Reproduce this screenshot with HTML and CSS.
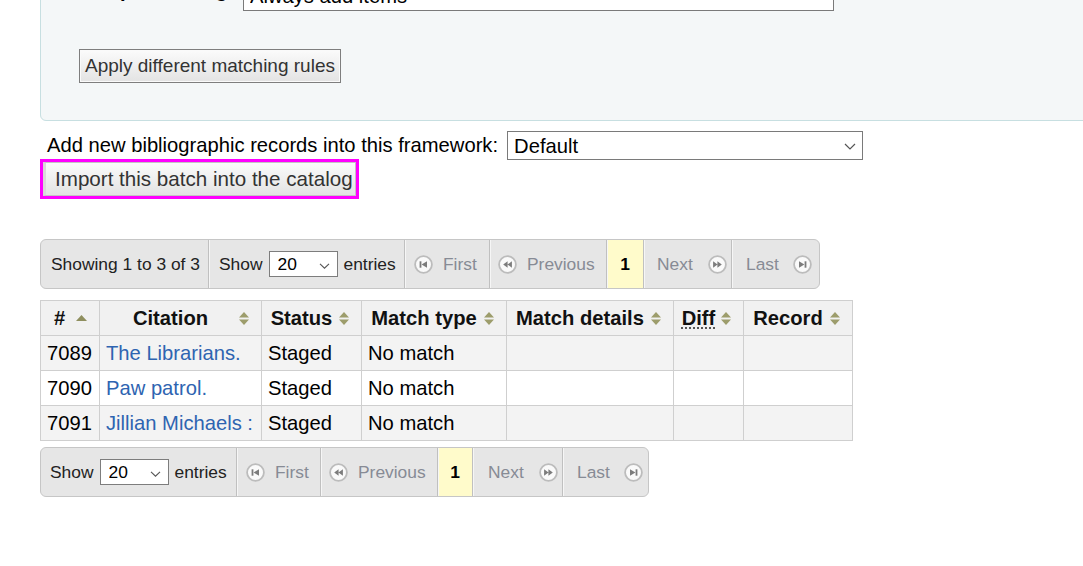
FILE: index.html
```html
<!DOCTYPE html>
<html>
<head>
<meta charset="utf-8">
<title>Manage staged records</title>
<link rel="stylesheet" href="styles.css">
</head>
<body>
<div class="page">
  <fieldset class="rows">
    <div class="field-row">
      <label class="lbl">Item processing:</label>
      <span class="sel sel-wide">
        <select><option>Always add items</option></select>
        <svg class="chev" width="12" height="7" viewBox="0 0 12 7"><path d="M1 1l5 5 5-5" fill="none" stroke="#555" stroke-width="1.2"/></svg>
      </span>
    </div>
    <button class="btn btn-apply">Apply different matching rules</button>
  </fieldset>

  <div class="fw-row">
    <span class="fw-label">Add new bibliographic records into this framework:</span>
    <span class="sel sel-fw">
      <select><option>Default</option></select>
      <svg class="chev" width="12" height="7" viewBox="0 0 12 7"><path d="M1 1l5 5 5-5" fill="none" stroke="#555" stroke-width="1.2"/></svg>
    </span>
  </div>
  <button class="btn btn-import">Import this batch into the catalog</button>

  <div class="pager pager-top">
    <div class="pg-seg pg-info">Showing 1 to 3 of 3</div>
    <div class="pg-seg pg-len">Show
      <span class="sel sel-sm">
        <select><option>20</option></select>
        <svg class="chev" width="11" height="6" viewBox="0 0 11 6"><path d="M1 .8l4.5 4.4 4.5-4.4" fill="none" stroke="#555" stroke-width="1.1"/></svg>
      </span>
      entries</div>
    <div class="pg-seg pg-btn pg-first">
      <svg class="pg-ico" width="19" height="19" viewBox="0 0 19 19"><circle cx="9.5" cy="9.5" r="8.4" fill="#fafafa" stroke="#bcbcbc" stroke-width="1.8"/><rect x="5.6" y="6.3" width="1.8" height="6.4" fill="#7c7c7c"/><path d="M13 6.3v6.4L7.6 9.5z" fill="#7c7c7c"/></svg>
      <span>First</span></div>
    <div class="pg-seg pg-btn pg-prev">
      <svg class="pg-ico" width="19" height="19" viewBox="0 0 19 19"><circle cx="9.5" cy="9.5" r="8.4" fill="#fafafa" stroke="#bcbcbc" stroke-width="1.8"/><path d="M9.6 6.3v6.4L5.2 9.5zM13.9 6.3v6.4L9.5 9.5z" fill="#7c7c7c"/></svg>
      <span>Previous</span></div>
    <div class="pg-seg pg-cur">1</div>
    <div class="pg-seg pg-btn pg-next">
      <span>Next</span>
      <svg class="pg-ico" width="19" height="19" viewBox="0 0 19 19"><circle cx="9.5" cy="9.5" r="8.4" fill="#fafafa" stroke="#bcbcbc" stroke-width="1.8"/><path d="M5.1 6.3v6.4l4.4-3.2zM9.4 6.3v6.4l4.4-3.2z" fill="#7c7c7c"/></svg></div>
    <div class="pg-seg pg-btn pg-last">
      <span>Last</span>
      <svg class="pg-ico" width="19" height="19" viewBox="0 0 19 19"><circle cx="9.5" cy="9.5" r="8.4" fill="#fafafa" stroke="#bcbcbc" stroke-width="1.8"/><path d="M6 6.3v6.4l5.4-3.2z" fill="#7c7c7c"/><rect x="11.6" y="6.3" width="1.8" height="6.4" fill="#7c7c7c"/></svg></div>
  </div>

  <table class="records">
    <colgroup>
      <col class="c1"><col class="c2"><col class="c3"><col class="c4"><col class="c5"><col class="c6"><col class="c7">
    </colgroup>
    <thead>
      <tr>
        <th><div class="th-in"><span>#</span><svg width="11" height="6" viewBox="0 0 11 6"><path d="M5.5 0L11 6H0z" fill="#8f8f5f"/></svg></div></th>
        <th><div class="th-in"><span>Citation</span><svg width="10" height="13" viewBox="0 0 10 13"><path d="M5 0l5 5.5H0zM5 13L0 7.5h10z" fill="#9d9d6c"/></svg></div></th>
        <th><div class="th-in"><span>Status</span><svg width="10" height="13" viewBox="0 0 10 13"><path d="M5 0l5 5.5H0zM5 13L0 7.5h10z" fill="#9d9d6c"/></svg></div></th>
        <th><div class="th-in"><span>Match type</span><svg width="10" height="13" viewBox="0 0 10 13"><path d="M5 0l5 5.5H0zM5 13L0 7.5h10z" fill="#9d9d6c"/></svg></div></th>
        <th><div class="th-in"><span>Match details</span><svg width="10" height="13" viewBox="0 0 10 13"><path d="M5 0l5 5.5H0zM5 13L0 7.5h10z" fill="#9d9d6c"/></svg></div></th>
        <th><div class="th-in"><span><abbr title="Differences between the original bibliographic record and the imported">Diff</abbr></span><svg width="10" height="13" viewBox="0 0 10 13"><path d="M5 0l5 5.5H0zM5 13L0 7.5h10z" fill="#9d9d6c"/></svg></div></th>
        <th><div class="th-in"><span>Record</span><svg width="10" height="13" viewBox="0 0 10 13"><path d="M5 0l5 5.5H0zM5 13L0 7.5h10z" fill="#9d9d6c"/></svg></div></th>
      </tr>
    </thead>
    <tbody>
      <tr class="odd"><td>7089</td><td><a href="#">The Librarians.</a></td><td>Staged</td><td>No match</td><td></td><td></td><td></td></tr>
      <tr class="even"><td>7090</td><td><a href="#">Paw patrol.</a></td><td>Staged</td><td>No match</td><td></td><td></td><td></td></tr>
      <tr class="odd"><td>7091</td><td><a href="#">Jillian Michaels :</a></td><td>Staged</td><td>No match</td><td></td><td></td><td></td></tr>
    </tbody>
  </table>

  <div class="pager pager-bottom">
    <div class="pg-seg pg-len pg-len-b">Show
      <span class="sel sel-sm">
        <select><option>20</option></select>
        <svg class="chev" width="11" height="6" viewBox="0 0 11 6"><path d="M1 .8l4.5 4.4 4.5-4.4" fill="none" stroke="#555" stroke-width="1.1"/></svg>
      </span>
      entries</div>
    <div class="pg-seg pg-btn pg-first pg-first-b">
      <svg class="pg-ico" width="19" height="19" viewBox="0 0 19 19"><circle cx="9.5" cy="9.5" r="8.4" fill="#fafafa" stroke="#bcbcbc" stroke-width="1.8"/><rect x="5.6" y="6.3" width="1.8" height="6.4" fill="#7c7c7c"/><path d="M13 6.3v6.4L7.6 9.5z" fill="#7c7c7c"/></svg>
      <span>First</span></div>
    <div class="pg-seg pg-btn pg-prev">
      <svg class="pg-ico" width="19" height="19" viewBox="0 0 19 19"><circle cx="9.5" cy="9.5" r="8.4" fill="#fafafa" stroke="#bcbcbc" stroke-width="1.8"/><path d="M9.6 6.3v6.4L5.2 9.5zM13.9 6.3v6.4L9.5 9.5z" fill="#7c7c7c"/></svg>
      <span>Previous</span></div>
    <div class="pg-seg pg-cur pg-cur-b">1</div>
    <div class="pg-seg pg-btn pg-next pg-next-b">
      <span>Next</span>
      <svg class="pg-ico" width="19" height="19" viewBox="0 0 19 19"><circle cx="9.5" cy="9.5" r="8.4" fill="#fafafa" stroke="#bcbcbc" stroke-width="1.8"/><path d="M5.1 6.3v6.4l4.4-3.2zM9.4 6.3v6.4l4.4-3.2z" fill="#7c7c7c"/></svg></div>
    <div class="pg-seg pg-btn pg-last pg-last-b">
      <span>Last</span>
      <svg class="pg-ico" width="19" height="19" viewBox="0 0 19 19"><circle cx="9.5" cy="9.5" r="8.4" fill="#fafafa" stroke="#bcbcbc" stroke-width="1.8"/><path d="M6 6.3v6.4l5.4-3.2z" fill="#7c7c7c"/><rect x="11.6" y="6.3" width="1.8" height="6.4" fill="#7c7c7c"/></svg></div>
  </div>
</div>
</body>
</html>
```

FILE: styles.css
```css
* { box-sizing: border-box; }

html, body {
  margin: 0;
  padding: 0;
  background: #fff;
  overflow: hidden;
}

body {
  font-family: "Liberation Sans", Arial, sans-serif;
  font-size: 20.2px;
  color: #000;
}

.page {
  padding-left: 40px;
  margin-top: -30px;
}

/* ---------- top fieldset ---------- */
.rows {
  margin: 0 -30px 0 0;
  min-width: 0;
  padding: 10px 0 37px 32px;
  background: #f4f7f8;
  border: 1px solid #c7dfe1;
  border-radius: 6px;
}

.field-row {
  display: flex;
  align-items: flex-start;
  height: 30px;
}

.lbl {
  width: 160px;
  margin: -2px 10px 0 0;
  line-height: 23px;
  font-weight: bold;
  text-align: right;
  white-space: nowrap;
}

.sel {
  position: relative;
  display: inline-block;
}

.sel select {
  appearance: none;
  -webkit-appearance: none;
  display: block;
  margin: 0;
  border: 1px solid #7a7a7a;
  background: #fff;
  color: #000;
  font-family: "Liberation Sans", Arial, sans-serif;
  border-radius: 0;
}

.sel .chev {
  position: absolute;
  top: 50%;
  pointer-events: none;
}

.sel-wide select {
  width: 591px;
  height: 30px;
  font-size: 20.2px;
  padding: 0 6px;
}
.sel-wide .chev { right: 10px; margin-top: -3px; }

.btn {
  display: block;
  font-family: "Liberation Sans", Arial, sans-serif;
  color: #333;
  cursor: pointer;
  border-radius: 0;
  background: linear-gradient(#fbfbfb, #e3e3e3);
}

.btn-apply {
  margin: 38px 0 0 6px;
  height: 34px;
  padding: 0 5px;
  font-size: 19px;
  border: 1px solid #7e7e7e;
  box-shadow: inset 0 0 0 1px #fafafa;
}

/* ---------- framework row ---------- */
.fw-row {
  display: flex;
  align-items: center;
  height: 29px;
  margin-top: 10px;
  padding-left: 7px;
}

.fw-label { margin-right: 9px; }

.sel-fw select {
  width: 356px;
  height: 29px;
  font-size: 20.2px;
  padding: 0 6px;
}
.sel-fw .chev { right: 7px; margin-top: -3px; }

.btn-import {
  margin: 2px 0 0 3px;
  width: 313px;
  height: 34px;
  padding: 0 0 0 9px;
  text-align: left;
  font-size: 20.6px;
  border: 1px solid #c4c4c4;
  border-left: 3px solid #d9d9d9;
  outline: 3px solid #ff00ff;
}

/* ---------- pager ---------- */
.pager {
  display: flex;
  width: fit-content;
  height: 50px;
  background: #e6e6e6;
  border: 1px solid #c6c6c6;
  border-radius: 6px;
  overflow: hidden;
  font-size: 17.4px;
  color: #222;
}

.pager-top { margin-top: 43px; }
.pager-bottom { margin-top: 6px; }

.pg-seg {
  display: flex;
  align-items: center;
  flex: none;
  border-left: 1px solid #c0c0c0;
  box-shadow: inset 1px 0 0 #f6f6f6;
  white-space: nowrap;
}
.pg-seg:first-child { border-left: 0; box-shadow: none; }

.pg-info { width: 167px; padding-left: 10px; }

.pg-len { width: 196px; padding-left: 10px; }
.pg-len-b { width: 195px; padding-left: 9px; }

.sel-sm { margin: 0 6px; }
.sel-sm select {
  width: 69px;
  height: 26px;
  font-size: 17.4px;
  padding: 0 8px;
  border-color: #7d7d7d;
}
.sel-sm .chev { right: 8px; margin-top: -1px; }

.pg-btn { color: #878b95; }
.pg-first { width: 85px; gap: 10px; padding-left: 9px; }
.pg-first-b { width: 84px; }
.pg-prev { width: 117px; gap: 10px; padding-left: 8px; }
.pg-next { width: 88px; gap: 15px; padding-left: 13px; }
.pg-next-b { width: 90px; padding-left: 15px; }
.pg-last { width: 88px; gap: 14px; padding-left: 14px; }
.pg-last-b { width: 86px; }

.pg-ico { flex: none; }

.pg-cur {
  width: 37px;
  justify-content: center;
  background: #fffbcb;
  font-weight: bold;
  color: #000;
}
.pg-cur-b { width: 35px; }

/* ---------- table ---------- */
.records {
  margin-top: 11px;
  border-collapse: collapse;
  table-layout: fixed;
  width: 812px;
  border: 1px solid #cbcbcb;
}

.c1 { width: 59px; }
.c2 { width: 162px; }
.c3 { width: 100px; }
.c4 { width: 145px; }
.c5 { width: 167px; }
.c6 { width: 70px; }
.c7 { width: 109px; }

.records th,
.records td {
  border: 1px solid #cfcfcf;
  height: 35px;
  line-height: 23px;
  padding: 0 6px;
  white-space: nowrap;
  overflow: hidden;
}

.records th {
  background: #f1f1f1;
  font-weight: bold;
  padding: 0 12px 0 6px;
  color: #111;
}

.th-in {
  display: flex;
  align-items: center;
}
.th-in span {
  flex: 1;
  text-align: center;
}
.th-in svg { margin-left: 4px; flex: none; }

abbr {
  text-decoration: underline dotted #555;
  text-underline-offset: 3px;
}

.records tr.odd td { background: #f3f3f3; }
.records tr.even td { background: #fff; }

.records a {
  color: #2e64b1;
  text-decoration: none;
}
```
